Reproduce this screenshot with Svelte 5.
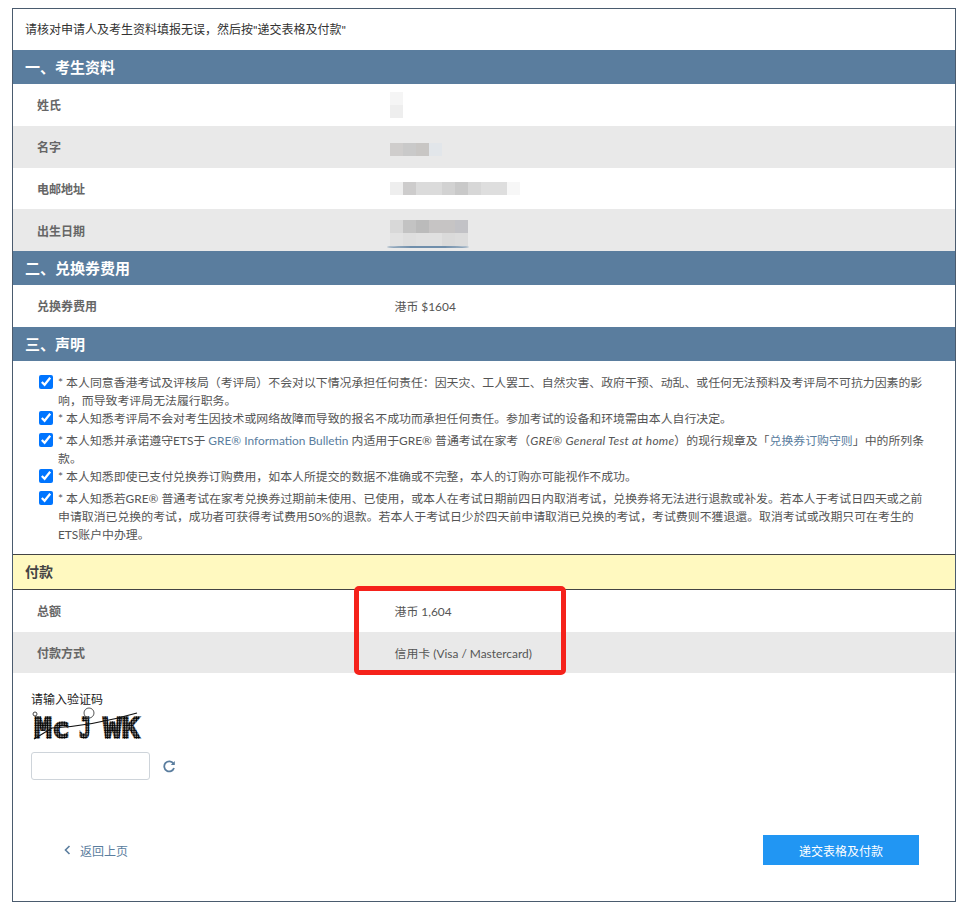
<script>
	const blur = {
		surname: [['#f5f5f5'], ['#eeeeee']],
		name: [['#cfcdcc', '#c9c9c9', '#c8c6c4', '#e2e6ea']],
		email: [['#eeeeee', '#cdcccc', '#dbdbdb', '#dbdbdb', '#d2d2d2', '#c9c9c9', '#d7d7d7', '#dedede', '#dedede', '#f7f7f7']],
		birth: [
			['#d8d8d8', '#c3c3c3', '#bbbbbb', '#c6c4c4', '#c6c4c4', '#c2c2c6'],
			['#e2e2e2', '#dedede', '#e0e0e0', '#e0e0e0', '#dadada', '#dcdcdc']
		]
	};
</script>

{#snippet mosaic(rows)}
	<div class="mosaic">
		{#each rows as row}
			<div class="mosaic-row">
				{#each row as c}
					<span class="cell" style="background:{c}"></span>
				{/each}
			</div>
		{/each}
	</div>
{/snippet}

<div class="page">
	<div class="frame">
		<p class="intro">请核对申请人及考生资料填报无误，然后按"递交表格及付款"</p>

		<h2 class="band">一、考生资料</h2>
		<div class="row">
			<div class="label">姓氏</div>
			<div class="value">{@render mosaic(blur.surname)}</div>
		</div>
		<div class="row alt">
			<div class="label">名字</div>
			<div class="value shift">{@render mosaic(blur.name)}</div>
		</div>
		<div class="row">
			<div class="label">电邮地址</div>
			<div class="value">{@render mosaic(blur.email)}</div>
		</div>
		<div class="row alt">
			<div class="label">出生日期</div>
			<div class="value shift">
				{@render mosaic(blur.birth)}
				<span class="streak"></span>
			</div>
		</div>

		<h2 class="band">二、兑换券费用</h2>
		<div class="row">
			<div class="label">兑换券费用</div>
			<div class="value">港币 $1604</div>
		</div>

		<h2 class="band">三、声明</h2>
		<div class="terms">
			<label class="term">
				<input type="checkbox" checked />
				<span>* 本人同意香港考试及评核局（考评局）不会对以下情况承担任何责任：因天灾、工人罢工、自然灾害、政府干预、动乱、或任何无法预料及考评局不可抗力因素的影响，而导致考评局无法履行职务。</span>
			</label>
			<label class="term">
				<input type="checkbox" checked />
				<span>* 本人知悉考评局不会对考生因技术或网络故障而导致的报名不成功而承担任何责任。参加考试的设备和环境需由本人自行决定。</span>
			</label>
			<label class="term">
				<input type="checkbox" checked />
				<span>* 本人知悉并承诺遵守ETS于 <a href="#gre">GRE® Information Bulletin</a> 内适用于GRE® 普通考试在家考（<em>GRE® General Test at home</em>）的现行规章及「<a href="#rules">兑换券订购守则</a>」中的所列条款。</span>
			</label>
			<label class="term">
				<input type="checkbox" checked />
				<span>* 本人知悉即使已支付兑换券订购费用，如本人所提交的数据不准确或不完整，本人的订购亦可能视作不成功。</span>
			</label>
			<label class="term">
				<input type="checkbox" checked />
				<span>* 本人知悉若GRE® 普通考试在家考兑换券过期前未使用、已使用，或本人在考试日期前四日内取消考试，兑换券将无法进行退款或补发。若本人于考试日四天或之前申请取消已兑换的考试，成功者可获得考试费用50%的退款。若本人于考试日少於四天前申请取消已兑换的考试，考试费则不獲退還。取消考试或改期只可在考生的ETS账户中办理。</span>
			</label>
		</div>

		<h2 class="pay-band">付款</h2>
		<div class="pay-rows">
			<div class="row">
				<div class="label">总额</div>
				<div class="value">港币 1,604</div>
			</div>
			<div class="row alt">
				<div class="label">付款方式</div>
				<div class="value">信用卡 (Visa / Mastercard)</div>
			</div>
			<div class="highlight"></div>
		</div>

		<div class="captcha">
			<div class="captcha-label">请输入验证码</div>
			<svg class="captcha-img" width="112" height="32" viewBox="0 0 112 32">
				<defs>
					<pattern id="dots" width="2.4" height="2.4" patternUnits="userSpaceOnUse">
						<circle cx="1.2" cy="1.2" r="1.15" fill="#000" />
					</pattern>
				</defs>
				<text class="cap-text" x="2" y="28" textLength="36" lengthAdjust="spacingAndGlyphs">Mc</text>
				<text class="cap-text" x="47" y="28" textLength="12" lengthAdjust="spacingAndGlyphs">J</text>
				<text class="cap-text" x="71" y="28" textLength="37" lengthAdjust="spacingAndGlyphs">WK</text>
				<path d="M2 29 L20 18 Q60 16 105 3" fill="none" stroke="#111" stroke-width="1.2" />
				<circle cx="3" cy="4" r="2" fill="#fff" stroke="#444" />
				<circle cx="57" cy="3" r="5" fill="none" stroke="#555" />
			</svg>
			<div class="captcha-input">
				<input type="text" aria-label="验证码" />
				<svg class="refresh" width="14" height="14" viewBox="0 0 14 14" fill="none" stroke="#5a7d9e" stroke-width="1.8">
					<path d="M11.4 3.6 A5 5 0 1 0 12 8" />
					<path d="M12.8 1 L12.8 5 L8.8 5 Z" fill="#5a7d9e" stroke="none" />
				</svg>
			</div>
		</div>

		<div class="actions">
			<a class="back" href="#back">
				<svg width="7" height="10" viewBox="0 0 7 10" fill="none" stroke="#5a7d9e" stroke-width="1.6"><path d="M5.5 1 L1.5 5 L5.5 9" /></svg>
				返回上页
			</a>
			<button class="submit">递交表格及付款</button>
		</div>
	</div>
</div>

<style>
	:global(body) { background: #fff; }
	.page {
		width: 964px; height: 912px; box-sizing: border-box; padding: 8px 8px 10px 12px;
		font-family: Lato, "Noto Sans CJK SC", sans-serif; font-size: 12px; color: #555;
	}
	.frame { height: 894px; box-sizing: border-box; border: 1px solid #4a5b6e; }
	.intro { margin: 0; height: 41px; line-height: 41px; padding-left: 12px; color: #333; }
	.band {
		margin: 0; height: 34px; line-height: 34px; padding-left: 12px;
		background: #5a7d9e; color: #fff; font-size: 15px; font-weight: 700;
	}
	.row { display: flex; height: 41.75px; align-items: center; }
	.alt { background: #e9e9e9; }
	.label { width: 358px; padding-left: 24px; font-weight: 700; color: #666; }
	.value { position: relative; font-size: 11.9px; margin-left: -0.5px; }
	.shift { padding-top: 5px; }
	.mosaic { margin-left: -4.5px; }
	.mosaic-row { display: flex; }
	.cell { width: 13px; height: 13px; }
	.streak {
		position: absolute; left: -8px; bottom: -2px; width: 82px; height: 2px;
		border-radius: 50%; background: #6f8eab;
	}
	.terms { height: 193px; box-sizing: border-box; padding: 13px 30px 0 26px; }
	.term { display: flex; min-height: 22px; line-height: 18px; color: #555; font-size: 11.9px; }
	.term input {
		flex: none; width: 14px; height: 14px; margin: 1px 5px 0 0; accent-color: #0075ff;
	}
	.term em { letter-spacing: 0.25px; }
	a { color: #5a7d9e; text-decoration: none; }
	.pay-band {
		margin: 0; height: 36px; line-height: 34px; box-sizing: border-box; padding-left: 12px;
		background: #fff9c0; border-top: 1px solid #444; border-bottom: 1px solid #444;
		font-size: 14px; font-weight: 700; color: #444;
	}
	.pay-rows { position: relative; }
	.highlight {
		position: absolute; left: 341px; top: -4px; width: 212px; height: 89px; box-sizing: border-box;
		border: 5px solid #f5221b; border-radius: 5px;
	}
	.captcha { padding: 20px 0 0 18px; }
	.captcha-label { line-height: 14px; color: #222; }
	.captcha-img { display: block; margin: 3px 0 10px 1px; overflow: visible; }
	.cap-text {
		font-family: "DejaVu Sans Mono", monospace; font-size: 28px; font-weight: 700;
		fill: url(#dots); stroke: url(#dots); stroke-width: 1.5;
	}
	.captcha-input { display: flex; align-items: center; gap: 12px; }
	.captcha-input input {
		width: 119px; height: 28px; box-sizing: border-box; padding: 0 8px;
		border: 1px solid #ced4da; border-radius: 3px; background: #fff;
	}
	.refresh { margin-top: 2px; }
	.actions {
		display: flex; justify-content: space-between; align-items: center;
		margin-top: 55px; padding: 0 36px 0 51px;
	}
	.back { display: flex; align-items: center; gap: 9px; }
	.submit {
		width: 156px; height: 30px; border: none; background: #2196f3; color: #fff;
		font: inherit; padding: 0;
	}
</style>
